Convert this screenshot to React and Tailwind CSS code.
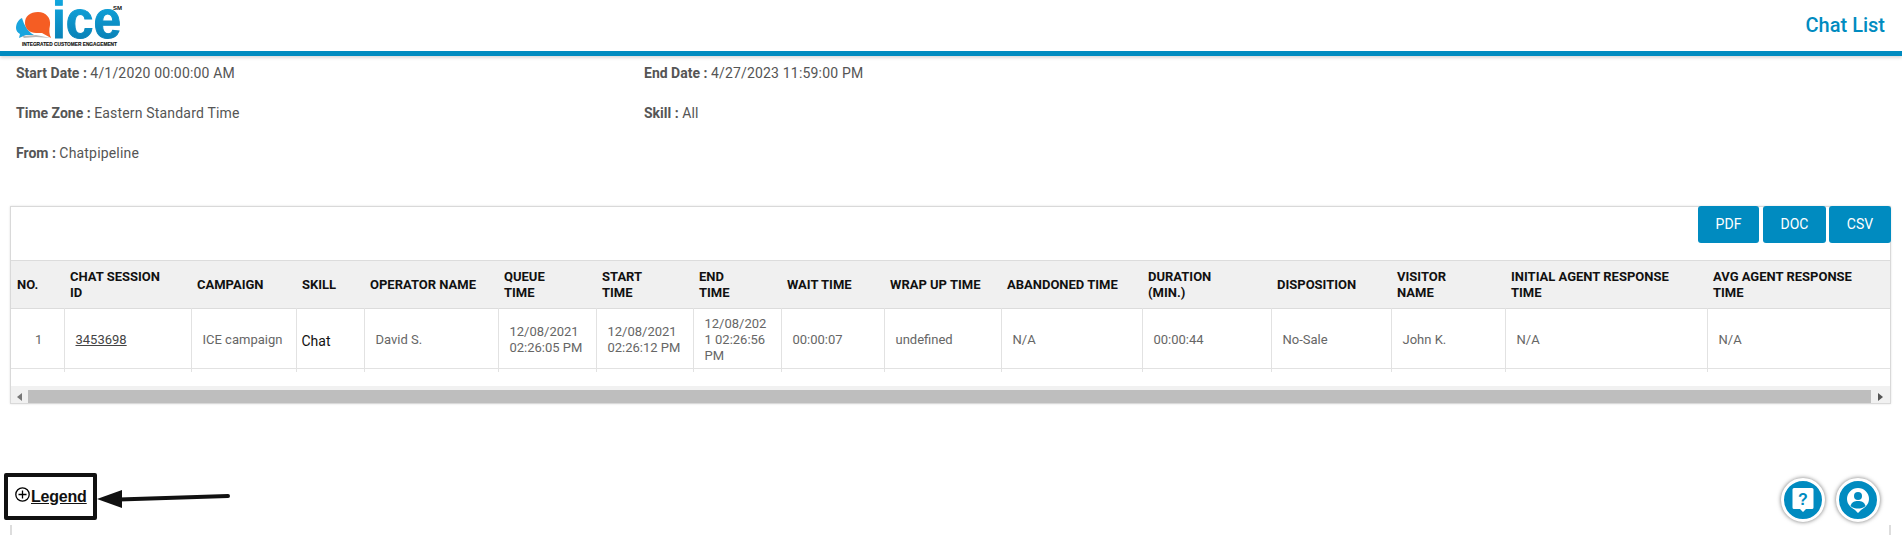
const columns = [
  { label: 'No.', width: 53 },
  { label: 'Chat Session\nID', width: 127 },
  { label: 'Campaign', width: 105 },
  { label: 'Skill', width: 68 },
  { label: 'Operator Name', width: 134 },
  { label: 'Queue\nTime', width: 98 },
  { label: 'Start\nTime', width: 97 },
  { label: 'End\nTime', width: 88 },
  { label: 'Wait Time', width: 103 },
  { label: 'Wrap Up Time', width: 117 },
  { label: 'Abandoned Time', width: 141 },
  { label: 'Duration\n(Min.)', width: 129 },
  { label: 'Disposition', width: 120 },
  { label: 'Visitor\nName', width: 114 },
  { label: 'Initial Agent Response\nTime', width: 202 },
  { label: 'Avg Agent Response\nTime', width: 183 },
];

function Logo() {
  return (
    <svg width="112" height="50" viewBox="0 0 112 50" className="block">
      <defs>
        <linearGradient id="iceBlue" x1="0" y1="0" x2="0" y2="1">
          <stop offset="0" stopColor="#12aee6" />
          <stop offset="1" stopColor="#0778ad" />
        </linearGradient>
      </defs>
      <path d="M6 18c-4 2-6 6-6 10 0 3 2 5 4 6l-1 4 7-3h8C12 32 8 25 6 18z" fill="#1aa5de" />
      <path d="M22 12c-8 0-13 4-13 11 0 6 5 10 11 10h6l9 5c-2-4-2-8-1-13 1-7-4-13-12-13z" fill="#f55d23" />
      <path d="M6 36l14-1 15 3-15-1-12 1z" fill="#b9b9b9" />
      <text x="36" y="38" fontFamily="Liberation Sans, sans-serif" fontWeight="700" fontSize="51" textLength="69" lengthAdjust="spacingAndGlyphs" fill="url(#iceBlue)" stroke="url(#iceBlue)" strokeWidth="1">ice</text>
      <text x="97" y="10" fontFamily="Liberation Sans, sans-serif" fontWeight="700" fontSize="6" fill="#111">SM</text>
      <text x="6" y="46" fontFamily="Liberation Sans, sans-serif" fontWeight="700" fontSize="5.500" textLength="95" lengthAdjust="spacingAndGlyphs" fill="#111" stroke="#111" strokeWidth="0.15">INTEGRATED CUSTOMER ENGAGEMENT</text>
    </svg>
  );
}

function InfoItem({ label, value, className }) {
  return (
    <div className={className}>
      <span className="font-bold">{label} : </span>
      <span className="tracking-[0.18px]">{value}</span>
    </div>
  );
}

function Td({ children, className = '' }) {
  return (
    <td className={`border-r border-b border-[#e2e2e2] pt-[2px] pr-2 pl-[11px] align-middle ${className}`}>{children}</td>
  );
}

function ExportButton({ children, className = '' }) {
  return (
    <button className={`h-[37px] rounded-[3px] bg-[#008bc0] text-[14px] text-white ${className}`}>
      {children}
    </button>
  );
}

function RoundButton({ children }) {
  return (
    <button className="flex h-[44px] w-[44px] items-center justify-center rounded-full border-[3px] border-white bg-[#008bc0] shadow-[0_0_4px_rgba(0,0,0,0.55)]">
      {children}
    </button>
  );
}

export default function App() {
  return (
    <div className="relative h-[535px] w-full overflow-hidden bg-white font-['Roboto',sans-serif] text-[14px] text-[#555]">
      <header className="flex h-[56px] items-start justify-between border-b-[5px] border-[#008bc0] pl-[16px] pr-[17px] shadow-[0_2px_3px_rgba(0,0,0,0.15)]">
        <Logo />
        <h1 className="mt-[14px] text-[20px] leading-[22px] font-medium text-[#008bc0]">Chat List</h1>
      </header>

      <div className="flex flex-col gap-5 pt-[7px] pl-[16px] leading-5">
        <div className="flex">
          <InfoItem className="w-[628px]" label="Start Date" value="4/1/2020 00:00:00 AM" />
          <InfoItem label="End Date" value="4/27/2023 11:59:00 PM" />
        </div>
        <div className="flex">
          <InfoItem className="w-[628px]" label="Time Zone" value="Eastern Standard Time" />
          <InfoItem label="Skill" value="All" />
        </div>
        <InfoItem label="From" value="Chatpipeline" />
      </div>

      <section className="mt-[43px] ml-[10px] h-[198px] w-[1881px] border border-[#d9d9d9] shadow-[0_0_2px_rgba(0,0,0,0.12)]">
        <div className="-mt-px -mr-px flex h-[54px] items-start justify-end gap-[3px]">
          <ExportButton className="mr-[1px] w-[61px]">PDF</ExportButton>
          <ExportButton className="w-[63px]">DOC</ExportButton>
          <ExportButton className="w-[62px]">CSV</ExportButton>
        </div>
        <div className="h-[112px] overflow-hidden">
          <table className="w-[1879px] table-fixed border-collapse text-[13px] leading-4">
            <colgroup>
              {columns.map((c) => (
                <col key={c.label} style={{ width: c.width }} />
              ))}
            </colgroup>
            <thead>
              <tr className="h-[48px] border-y border-[#dcdcdc] bg-[#f0f0f0]">
                {columns.map((c) => (
                  <th key={c.label} className="px-[6px] text-left align-middle font-bold whitespace-pre-line text-[#111] uppercase">
                    {c.label}
                  </th>
                ))}
              </tr>
            </thead>
            <tbody className="text-[#666]">
              <tr className="h-[60px]">
                <Td className="text-center">1</Td>
                <Td><a className="text-[#444] underline">3453698</a></Td>
                <Td>ICE campaign</Td>
                <Td className="!px-[5px] !pt-[4px] text-[14px] text-[#111]">Chat</Td>
                <Td>David S.</Td>
                <Td>12/08/2021 02:26:05 PM</Td>
                <Td>12/08/2021 02:26:12 PM</Td>
                <Td className="break-all !pr-3">12/08/2021 02:26:56 PM</Td>
                <Td>00:00:07</Td>
                <Td>undefined</Td>
                <Td>N/A</Td>
                <Td>00:00:44</Td>
                <Td>No-Sale</Td>
                <Td>John K.</Td>
                <Td>N/A</Td>
                <Td className="border-r-0">N/A</Td>
              </tr>
              <tr className="h-[20px]">
                {columns.map((c) => (
                  <td key={c.label} className="border-r border-[#e2e2e2] last:border-r-0" />
                ))}
              </tr>
            </tbody>
          </table>
        </div>
        <div className="mt-[14px] flex h-[17px] items-end bg-[#f1f1f1]">
          <span className="flex h-[13px] w-[17px] items-center justify-center text-[#777]">
            <svg width="5" height="8" viewBox="0 0 5 8"><path d="M5 0v8L0 4z" fill="currentColor" /></svg>
          </span>
          <div className="h-[13px] flex-1 bg-[#bebebe]" />
          <span className="flex h-[13px] w-[19px] items-center justify-center text-[#555]">
            <svg width="5" height="8" viewBox="0 0 5 8"><path d="M0 0v8l5-4z" fill="currentColor" /></svg>
          </span>
        </div>
      </section>

      <div className="mt-[69px] ml-[4px] flex h-[47px] w-[93px] items-center rounded-[2px] border-[4px] border-[#111] pl-[7px] font-['Liberation_Sans',sans-serif] text-[16px] leading-none font-bold tracking-[-0.2px] text-[#111]">
        <svg width="15" height="15" viewBox="0 0 15 15" className="mb-[5px] shrink-0" fill="none" stroke="#000" strokeWidth="1.3">
          <circle cx="7.500" cy="7.500" r="6.700" />
          <path d="M7.500 3.500v8M3.500 7.500h8" />
        </svg>
        <span className="ml-[1px] underline">Legend</span>
      </div>

      <div className="mt-[5px] ml-[10px] h-[20px] w-[1881px] border-x-2 border-[#dddddd]" />

      {/* hand drawn annotation over the page */}
      <svg width="134" height="24" viewBox="0 0 134 24" className="absolute top-[487px] left-[97px]">
        <path d="M0 12 L25 3 L25 21 Z" fill="#111" />
        <path d="M22 12.500 L131 9" stroke="#111" strokeWidth="4" strokeLinecap="round" />
      </svg>

      <div className="absolute top-[478px] right-[22px] flex gap-[11px]">
        <RoundButton>
          <svg width="24" height="26" viewBox="0 0 24 26">
            <path d="M3 1h18a1.500 1.500 0 0 1 1.500 1.500v18a1.500 1.500 0 0 1-1.500 1.500h-6l-3 3-3-3H3a1.500 1.500 0 0 1-1.500-1.500v-18A1.500 1.500 0 0 1 3 1z" fill="#fff" />
            <text x="12" y="18" textAnchor="middle" fontFamily="Liberation Sans, sans-serif" fontWeight="700" fontSize="16" fill="#008bc0">?</text>
          </svg>
        </RoundButton>
        <RoundButton>
          <svg width="28" height="28" viewBox="0 0 28 28">
            <path d="M14 2a11 11 0 0 1 11 11c0 6-5 9-8 11l-3 3-3-3c-3-2-8-5-8-11A11 11 0 0 1 14 2z" fill="#fff" />
            <circle cx="14" cy="10" r="4" fill="#008bc0" />
            <path d="M6.500 20c1-4 4-5 7.500-5s6.500 1 7.500 5c-2 2-5 2.500-7.500 2.500S8.500 22 6.500 20z" fill="#008bc0" />
          </svg>
        </RoundButton>
      </div>
    </div>
  );
}
